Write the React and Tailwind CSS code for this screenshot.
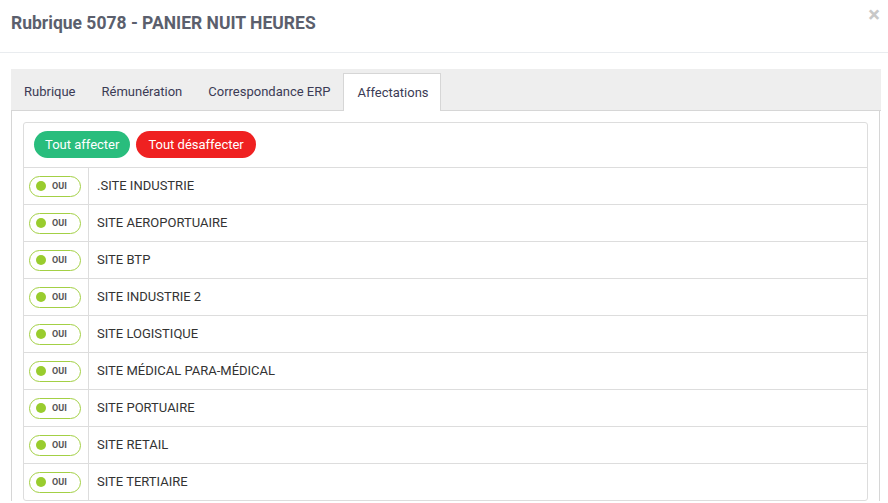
import React from 'react';

const sites = [
  '.SITE INDUSTRIE',
  'SITE AEROPORTUAIRE',
  'SITE BTP',
  'SITE INDUSTRIE 2',
  'SITE LOGISTIQUE',
  'SITE MÉDICAL PARA-MÉDICAL',
  'SITE PORTUAIRE',
  'SITE RETAIL',
  'SITE TERTIAIRE',
];

const tabs = ['Rubrique', 'Rémunération', 'Correspondance ERP'];

function Toggle() {
  return (
    <div className="flex items-center w-[52px] h-[21px] rounded-full border border-[#a3d045] pl-[6px] gap-[6px]">
      <span className="w-[10px] h-[10px] rounded-full bg-[#99cc2e]"></span>
      <span className="text-[9px] leading-none font-bold text-[#555]">OUI</span>
    </div>
  );
}

export default function App() {
  return (
    <div className="w-[888px] h-[503px] overflow-hidden bg-white" style={{ fontFamily: 'Roboto, sans-serif' }}>
      <div className="relative h-[53px] border-b border-[#e9ecef] px-[11px] pt-[13px]">
        <h1 className="text-[17.5px] leading-[21px] font-bold text-[#5b5f6d]">Rubrique 5078 - PANIER NUIT HEURES</h1>
        <button type="button" className="absolute right-[8px] top-[4px] text-[#c8c8c8] text-[22px] leading-none font-bold">×</button>
      </div>
      <div className="pl-[11px] pr-[7px] pt-[16px]">
        <div className="flex items-end h-[42px] bg-[#eeeeee] border-b border-[#d6d6d6]">
          {tabs.map((t) => (
            <div key={t} className="px-[13px] h-[37px] flex items-center text-[13px] text-[#3b3b55]">{t}</div>
          ))}
          <div className="-mb-[1px] h-[38px] pl-[13px] pr-[11px] flex items-center bg-white border border-b-0 border-[#d6d6d6] text-[13px] text-[#3b3b55]">Affectations</div>
        </div>
        <div className="mr-[1px] border-x border-[#d6d6d6] pt-[11px] px-[11px]">
          <div className="border border-[#dddddd] rounded-[3px]">
            <div className="flex gap-[6px] h-[44px] pt-[8px] pl-[10px]">
              <button type="button" className="h-[27px] px-[11px] rounded-full bg-[#29bd7d] text-white text-[13px]">Tout affecter</button>
              <button type="button" className="h-[27px] px-[12px] rounded-full bg-[#ef2121] text-white text-[13px]">Tout désaffecter</button>
            </div>
            {sites.map((s) => (
              <div key={s} className="flex h-[37px] border-t border-[#dddddd]">
                <div className="w-[65px] flex items-center pl-[5px] border-r border-[#dddddd]">
                  <Toggle />
                </div>
                <div className="flex items-center pl-[8px] text-[13px] text-[#333]">{s}</div>
              </div>
            ))}
          </div>
        </div>
      </div>
    </div>
  );
}
